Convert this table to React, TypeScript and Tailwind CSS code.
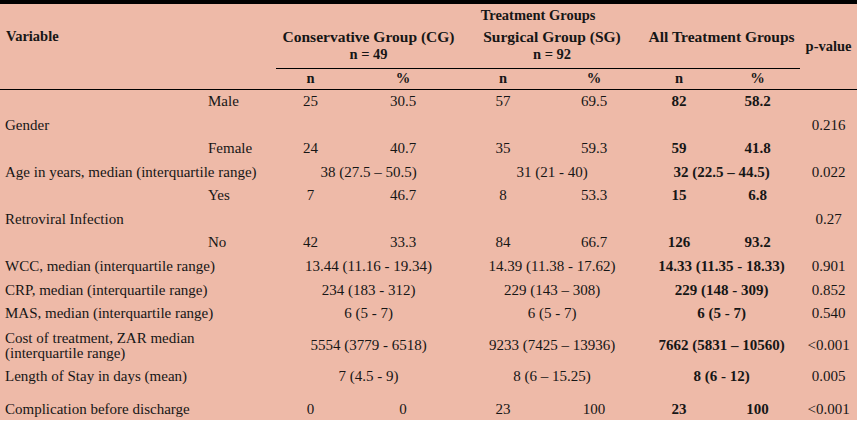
type Row = {
  label: string;
  sub?: boolean;
  h: string;
  cells?: string[];
  merged?: [string, string, string];
  p?: string;
  multi?: boolean;
  align?: string;
};

const rows: Row[] = [
  { label: 'Male', sub: true, h: 'h-[24px]', cells: ['25', '30.5', '57', '69.5', '82', '58.2'] },
  { label: 'Gender', h: 'h-[24px]', p: '0.216' },
  { label: 'Female', sub: true, h: 'h-[23px]', cells: ['24', '40.7', '35', '59.3', '59', '41.8'] },
  { label: 'Age in years, median (interquartile range)', h: 'h-[24px]', merged: ['38 (27.5 – 50.5)', '31 (21 - 40)', '32 (22.5 – 44.5)'], p: '0.022' },
  { label: 'Yes', sub: true, h: 'h-[23px]', cells: ['7', '46.7', '8', '53.3', '15', '6.8'] },
  { label: 'Retroviral Infection', h: 'h-[24px]', p: '0.27' },
  { label: 'No', sub: true, h: 'h-[23px]', cells: ['42', '33.3', '84', '66.7', '126', '93.2'] },
  { label: 'WCC, median (interquartile range)', h: 'h-[24px]', merged: ['13.44 (11.16 - 19.34)', '14.39 (11.38 - 17.62)', '14.33 (11.35 - 18.33)'], p: '0.901' },
  { label: 'CRP, median (interquartile range)', h: 'h-[24px]', merged: ['234 (183 - 312)', '229 (143 – 308)', '229 (148 - 309)'], p: '0.852' },
  { label: 'MAS, median (interquartile range)', h: 'h-[23px]', merged: ['6 (5 - 7)', '6 (5 - 7)', '6 (5 - 7)'], p: '0.540' },
  { label: 'Cost of treatment, ZAR median', multi: true, h: 'h-[41px]', merged: ['5554 (3779 - 6518)', '9233 (7425 – 13936)', '7662 (5831 – 10560)'], p: '<0.001' },
  { label: 'Length of Stay in days (mean)', h: 'h-[21px]', merged: ['7 (4.5 - 9)', '8 (6 – 15.25)', '8 (6 - 12)'], p: '0.005' },
  { label: 'Complication before discharge', h: 'h-[33px]', align: 'align-bottom pb-[2px]', cells: ['0', '0', '23', '100', '23', '100'], p: '<0.001' },
];

function DataRow({ r }: { r: Row }) {
  const va = r.align ?? 'align-middle';
  return (
    <tr className={r.h}>
      {r.sub ? (
        <>
          <td className={va} />
          <td className={`${va} pl-[6px]`}>{r.label}</td>
        </>
      ) : (
        <td colSpan={2} className={`${va} pl-[5px]`}>
          {r.multi ? (
            <div className="leading-[15px]">
              {r.label}
              <br />
              (interquartile range)
            </div>
          ) : (
            r.label
          )}
        </td>
      )}
      {r.cells &&
        r.cells.map((c, i) => (
          <td key={i} className={`${va} text-center ${i >= 4 ? 'font-bold' : ''}`}>
            {c}
          </td>
        ))}
      {r.merged &&
        r.merged.map((c, i) => (
          <td key={i} colSpan={2} className={`${va} text-center ${i === 2 ? 'font-bold' : ''}`}>
            {c}
          </td>
        ))}
      {!r.cells && !r.merged && <td colSpan={6} />}
      <td className={`${va} text-center`}>{r.p}</td>
    </tr>
  );
}

export default function App() {
  return (
    <div className="min-h-[421px] w-[861px] bg-white font-['Liberation_Serif','Times_New_Roman',serif] text-[15px] leading-[17px] text-[#161616]">
      <table className="w-[857px] table-fixed border-collapse border-t-4 border-black bg-[#eebaa8]">
        <colgroup>
          <col className="w-[202px]" />
          <col className="w-[74px]" />
          <col className="w-[69px]" />
          <col className="w-[116px]" />
          <col className="w-[84px]" />
          <col className="w-[98px]" />
          <col className="w-[72px]" />
          <col className="w-[85px]" />
          <col className="w-[57px]" />
        </colgroup>
        <thead className="text-[14.5px] font-bold">
          <tr className="h-[24px]">
            <td colSpan={2} rowSpan={2} className="pl-[6px] align-middle">
              Variable
            </td>
            <td colSpan={6} className="text-center align-middle">
              Treatment Groups
            </td>
            <td rowSpan={3} className="border-b border-black text-center align-middle">
              p-value
            </td>
          </tr>
          <tr className="h-[42px]">
            <td colSpan={2} className="border-b border-black pt-[2px] text-center align-top">
              <span className="text-[15.5px]">Conservative Group (CG)</span>
              <br />n = 49
            </td>
            <td colSpan={2} className="border-b border-black pt-[2px] text-center align-top">
              <span className="text-[15.5px]">Surgical Group (SG)</span>
              <br />n = 92
            </td>
            <td colSpan={2} className="border-b border-black pt-[2px] text-center align-top">
              <span className="text-[15.5px]">All Treatment Groups</span>
            </td>
          </tr>
          <tr className="h-[21px] border-b border-black">
            <td colSpan={2} />
            <td className="text-center">n</td>
            <td className="text-center">%</td>
            <td className="text-center">n</td>
            <td className="text-center">%</td>
            <td className="text-center">n</td>
            <td className="text-center">%</td>
          </tr>
        </thead>
        <tbody>
          {rows.map((r, i) => (
            <DataRow key={i} r={r} />
          ))}
        </tbody>
      </table>
    </div>
  );
}
